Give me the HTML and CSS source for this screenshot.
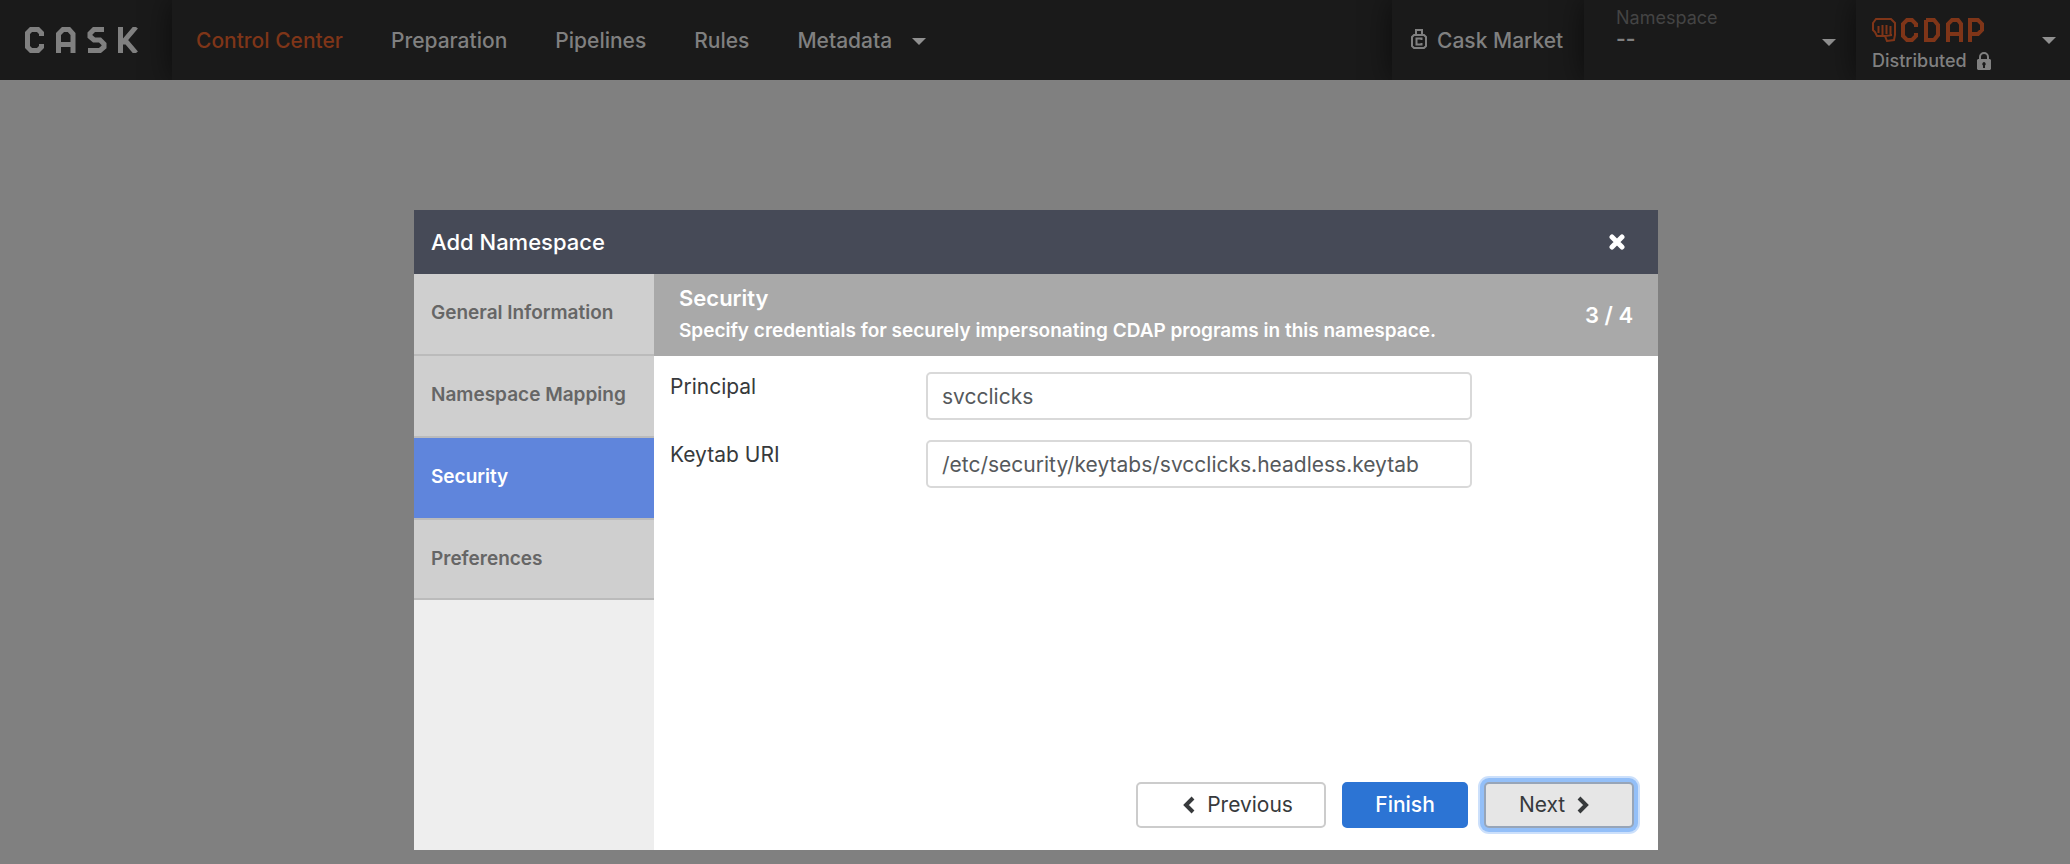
FILE: index.html
```html
<!DOCTYPE html>
<html lang="en">
<head>
<meta charset="utf-8">
<title>Add Namespace</title>
<link rel="stylesheet" href="styles.css">
</head>
<body>
<header class="navbar">
  <a class="brand" href="#" aria-label="Cask">
    <svg width="114" height="26" viewBox="0 0 114 26" fill="none" stroke="currentColor" stroke-width="5">
      <path d="M16.500 9V6l-3.500-3.500H6L2.500 6v14L6 23.500h7l3.500-3.500v-3"/>
      <path d="M33.500 26V7l4.500-4.500h6l4 4.500v19M33 17.500h15"/>
      <path d="M79 2.500H69l-4 4v3l4 3.500h6l4 4v3l-4 3.500H63"/>
      <path d="M95.500 0v26M96 15h5M111 0l-11 13 11 13"/>
    </svg>
  </a>
  <nav class="nav">
    <a class="nav-link active" href="#">Control Center</a>
    <a class="nav-link" href="#">Preparation</a>
    <a class="nav-link" href="#">Pipelines</a>
    <a class="nav-link" href="#">Rules</a>
    <a class="nav-link" href="#">Metadata<span class="caret"></span></a>
  </nav>
  <a class="market" href="#">
    <svg width="16" height="20" viewBox="0 0 16 20" fill="none" stroke="currentColor" stroke-width="2">
      <path d="M5 6V1h6v5M3 6h10l2 2v9l-2 2H3l-2-2V8zM10.500 11V9.500h-5v6h5V14"/>
    </svg>
    Cask Market
  </a>
  <button class="namespace" type="button">
    <span class="namespace-label">Namespace</span>
    <span class="namespace-value">--</span>
    <span class="caret"></span>
  </button>
  <button class="product" type="button">
    <span class="product-info">
      <svg class="cdap" width="112" height="24" viewBox="0 0 112 24" fill="none" stroke="currentColor">
        <path stroke-width="2" d="M14 18H5l-2-4-2-2V5l3-4h15l4 4v12l-1 5-7 1-2-5 7-1M6.500 8v7M10.500 7v11M14.500 7v9M18.500 8v9"/>
        <path stroke-width="4" d="M44 9V6l-4-4h-5l-4 4v12l4 4h5l4-4v-3M54 2v20h8l4-5V7l-4-5h-8M76 24V6l4-4h6l3 4v18M76 16h13M98 24V2h8l4 4v6l-4 4h-8"/>
      </svg>
      <span class="mode">Distributed
        <svg width="14" height="18" viewBox="0 0 14 18"><path d="M3 8V5a4 4 0 0 1 8 0v3" fill="none" stroke="currentColor" stroke-width="2"/><path fill="currentColor" fill-rule="evenodd" d="M1 7h12l1 1v9l-1 1H1l-1-1V8zM7 10a2 2 0 0 0-1 3.500V16h2v-2.500A2 2 0 0 0 7 10z"/></svg>
      </span>
    </span>
    <span class="caret"></span>
  </button>
</header>
<main class="modal" role="dialog" aria-labelledby="title">
  <div class="modal-header">
    <h1 id="title">Add Namespace</h1>
    <button class="close" type="button" aria-label="Close">
      <svg width="16" height="16" viewBox="0 0 16 16" stroke="currentColor" stroke-width="5" stroke-linecap="round"><path d="M3 3l10 10M13 3L3 13"/></svg>
    </button>
  </div>
  <div class="modal-body">
    <nav class="steps">
      <a class="step" href="#">General Information</a>
      <a class="step" href="#">Namespace Mapping</a>
      <a class="step current" href="#">Security</a>
      <a class="step" href="#">Preferences</a>
    </nav>
    <section class="content">
      <div class="content-header">
        <div>
          <h2>Security</h2>
          <p>Specify credentials for securely impersonating CDAP programs in this namespace.</p>
        </div>
        <span class="count">3 / 4</span>
      </div>
      <form class="form">
        <div class="row">
          <label for="principal">Principal</label>
          <input id="principal" type="text" value="svcclicks">
        </div>
        <div class="row">
          <label for="keytab">Keytab URI</label>
          <input id="keytab" type="text" value="/etc/security/keytabs/svcclicks.headless.keytab">
        </div>
      </form>
      <div class="actions">
        <button class="btn previous" type="button"><svg width="12" height="18" viewBox="0 0 12 18" fill="none" stroke="currentColor" stroke-width="4"><path d="M10 2L3 9l7 7"/></svg>Previous</button>
        <button class="btn finish" type="button">Finish</button>
        <button class="btn next" type="button">Next<svg width="12" height="18" viewBox="0 0 12 18" fill="none" stroke="currentColor" stroke-width="4"><path d="M2 2l7 7-7 7"/></svg></button>
      </div>
    </section>
  </div>
</main>
</body>
</html>
```
FILE: styles.css
```css
* { box-sizing: border-box; }
body {
  margin: 0;
  min-height: 100vh;
  background: #808080;
  font-family: Inter, "Liberation Sans", sans-serif;
  font-size: 21px;
  line-height: 30px;
  color: #373a3c;
}
a { color: inherit; text-decoration: none; }
button { font: inherit; color: inherit; border: 0; background: none; padding: 0; }
h1, h2, p { margin: 0; }

.navbar {
  display: flex;
  height: 80px;
  background: #1a1a1a;
  color: #808080;
  font-weight: 500;
  overflow: hidden;
}
.brand {
  display: flex;
  align-items: center;
  width: 172px;
  padding-left: 25px;
}
.nav { display: flex; flex: 1; }
.nav-link { display: flex; align-items: center; padding: 2px 24px 0; }
.nav-link.active { color: #7f3518; }
.active, .market, .namespace, .product { box-shadow: 0 0 30px #00000090; clip-path: inset(0 0 0 -40px); }
.caret {
  border: 7px solid transparent;
  border-top-color: #909090;
  border-bottom: 0;
}
.nav-link .caret { margin-left: 20px; }
.market { display: flex; align-items: center; gap: 10px; width: 192px; padding: 2px 0 0 19px; }
.market svg { margin-bottom: 4px; }
.namespace {
  display: grid;
  grid-template-columns: 1fr auto;
  grid-template-rows: 20px 1fr;
  width: 272px;
  padding: 8px 20px 0 32px;
  text-align: left;
}
.namespace-label { grid-column: 1 / 3; font-size: 18px; line-height: 20px; font-weight: 400; color: #444; }
.namespace-value { line-height: 22px; font-weight: 600; }
.namespace .caret { margin-top: 11px; align-self: start; }
.product {
  display: flex;
  align-items: center;
  justify-content: space-between;
  width: 214px;
  padding: 0 14px 0 16px;
}
.product-info { display: flex; flex-direction: column; gap: 8px; padding-top: 10px; }
.cdap { color: #7f3518; }
.mode { display: flex; align-items: center; gap: 10px; font-size: 18px; line-height: 22px; }

.modal {
  width: 60.1%;
  min-width: 900px;
  margin: 130px 0 14px 20%;
  background: #fff;
}
.modal-header {
  display: flex;
  align-items: center;
  justify-content: space-between;
  height: 64px;
  padding: 0 33px 0 17px;
  background: #464a57;
  color: #fff;
}
h1 { font-size: 22px; line-height: 30px; font-weight: 500; }
.close { display: flex; }
.modal-body { display: flex; min-height: 576px; }
.steps { width: 240px; background: #eee; }
.step {
  display: block;
  padding: 24px 0 26px 17px;
  border-bottom: 2px solid #bbb;
  background: #cfcfcf;
  color: #666;
  font-size: 19px;
  font-weight: 600;
}
.step:last-child { padding-bottom: 24px; }
.step.current { background: #5f85dc; color: #fff; }
.content { display: flex; flex: 1; flex-direction: column; }
.content-header {
  display: flex;
  align-items: center;
  justify-content: space-between;
  min-height: 82px;
  padding: 0 25px;
  background: #a9a9a9;
  color: #fff;
}
h2 { font-size: 22px; line-height: 32px; font-weight: 600; }
p { font-size: 19px; line-height: 34px; font-weight: 600; }
.count { font-size: 22px; font-weight: 600; }
.form { display: flex; flex: 1; flex-direction: column; gap: 20px; padding: 16px; }
.row { display: grid; grid-template-columns: 256px 546px; }
input {
  width: 100%;
  height: 48px;
  padding: 0 14px;
  border: 2px solid #d9d9d9;
  border-radius: 5px;
  color: #55595c;
  font: inherit;
}
.actions { display: flex; justify-content: flex-end; gap: 16px; padding: 0 24px 22px; }
.btn {
  display: flex;
  align-items: center;
  justify-content: center;
  gap: 12px;
  height: 46px;
  border: 2px solid #ccc;
  border-radius: 5px;
}
.previous { width: 190px; padding-left: 14px; }
.finish { width: 126px; border-color: #2c74d4; background: #2c74d4; color: #fff; font-weight: 500; }
.next { width: 150px; padding-right: 10px; border-color: #97a5b8; background: #e6e6e6; box-shadow: 0 0 0 4px #93bff8, 0 0 0 6px #cce0fb; }
```
